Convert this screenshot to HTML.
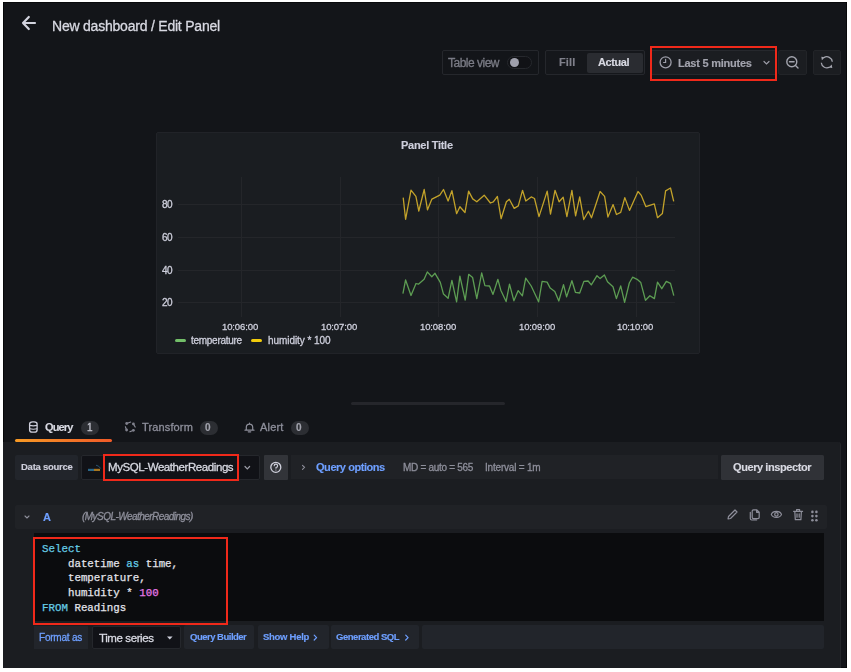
<!DOCTYPE html>
<html><head><meta charset="utf-8">
<style>
*{box-sizing:border-box;margin:0;padding:0}
html,body{width:851px;height:672px;overflow:hidden;background:#fff;font-family:"Liberation Sans",sans-serif}
.a{position:absolute}
#frame{position:absolute;left:3px;top:2px;width:844px;height:666px;background:#131519;box-shadow:0 0 0 0.6px #000 inset}
.t{position:absolute;white-space:nowrap;line-height:1;-webkit-text-stroke:0.3px currentColor;will-change:transform}
.btn{position:absolute;background:#1b1d21;border:1px solid #26282d;border-radius:2px}
</style></head><body>
<div id="frame"></div>
<!-- header -->
<svg class="a" style="left:0;top:0" width="851" height="672" viewBox="0 0 851 672">
  <!-- back arrow -->
  <path d="M23 23 H35 M28.8 17 L23 23 L28.8 29" fill="none" stroke="#d2d3de" stroke-width="2.2" stroke-linecap="round" stroke-linejoin="round"/>
</svg>

<!-- toolbar -->
<div class="a" style="left:442px;top:50px;width:97px;height:25px;border:1px solid #25272c;border-radius:2px"></div>
<div class="a" style="left:507.4px;top:56.2px;width:25px;height:12.8px;border:1.2px solid #26282d;border-radius:7px;background:#111216"></div>
<div class="a" style="left:510px;top:58px;width:9.3px;height:9.3px;border-radius:50%;background:#9fa0ac"></div>

<div class="a" style="left:545px;top:50px;width:100px;height:25px;border:1px solid #25272c;border-radius:2px;background:#15171b"></div>
<div class="a" style="left:587px;top:53px;width:56px;height:20px;background:#2a2c31;border-radius:2px"></div>

<div class="a" style="left:652px;top:50px;width:123px;height:25px;background:#1b1d21;border-top:1px solid #26282d;border-bottom:1px solid #26282d"></div>
<div class="a" style="left:650px;top:46px;width:127px;height:35px;border:2px solid #f0291a"></div>

<div class="a" style="left:778px;top:50px;width:29px;height:25px;background:#1b1d21;border:1px solid #222428;border-radius:2px"></div>
<div class="a" style="left:813px;top:50px;width:28px;height:25px;background:#1b1d21;border:1px solid #222428;border-radius:2px"></div>
<svg class="a" style="left:0;top:0" width="851" height="672" viewBox="0 0 851 672">
  <!-- clock -->
  <circle cx="665.6" cy="62.3" r="5.5" fill="none" stroke="#9c9da8" stroke-width="1.3"/>
  <path d="M665.6 59.3 V62.5 H663.6" fill="none" stroke="#9c9da8" stroke-width="1.2" stroke-linecap="round"/>
  <!-- chevron -->
  <path d="M764 61.5 L766.5 64 L769 61.5" fill="none" stroke="#9c9da8" stroke-width="1.2" stroke-linecap="round"/>
  <!-- zoom out -->
  <circle cx="791.8" cy="61.8" r="5" fill="none" stroke="#a3a4ae" stroke-width="1.4"/>
  <path d="M789.5 61.8 H794.1 M795.5 65.5 L798 68" fill="none" stroke="#a3a4ae" stroke-width="1.4" stroke-linecap="round"/>
  <!-- refresh -->
  <path d="M823.9 57.6 A5.5 5.5 0 0 1 832.3 61.8 M821.3 62.8 A5.5 5.5 0 0 0 829.7 67" fill="none" stroke="#a3a4ae" stroke-width="1.3" stroke-linecap="butt"/>
  <path d="M821.3 56.7 L824.9 57.3 L821.9 60.3 Z M832.3 68.1 L828.7 67.5 L831.7 64.5 Z" fill="#a3a4ae"/>
</svg>

<!-- panel -->
<div class="a" style="left:156px;top:132px;width:544px;height:222px;background:#1a1d21;border:1px solid #212328;border-radius:2px"></div>
<svg class="a" style="left:0;top:0" width="851" height="672" viewBox="0 0 851 672">
  <g stroke="#24262a" stroke-width="1">
    <path d="M178 204.5 H675 M178 237.5 H675 M178 270.5 H675 M178 302.5 H675"/>
    <path d="M241.5 177 V317 M340.5 177 V317 M438.5 177 V317 M537.5 177 V317 M636.5 177 V317"/>
  </g>
  <polyline fill="none" stroke="#c2a22a" stroke-width="1.3" stroke-linejoin="round" points="403.2,197.6 405.6,219.3 411.0,190.1 415.9,196.4 418.8,211.0 424.2,189.5 427.5,209.8 431.9,199.1 439.8,195.2 443.5,189.5 448.1,201.0 451.9,190.7 456.6,213.7 459.9,206.7 465.0,212.5 468.6,191.1 472.7,198.9 476.8,201.8 484.2,195.2 490.4,203.0 493.3,201.8 497.4,196.5 501.1,218.7 506.4,201.8 509.3,199.3 514.2,208.4 518.3,205.9 522.5,190.3 525.8,201.0 531.2,196.9 534.5,198.5 539.0,216.6 547.2,191.1 550.5,214.1 555.0,190.3 559.1,201.8 563.2,197.3 566.9,216.6 571.9,190.3 575.6,215.8 579.7,196.9 583.7,219.5 588.4,211.2 591.5,217.8 600.1,191.5 604.6,196.4 607.9,217.0 613.1,204.6 616.5,214.5 620.7,212.4 624.8,197.6 629.5,210.4 638.0,191.5 641.3,195.4 645.9,206.7 654.3,203.9 657.5,217.7 662.4,213.4 665.6,190.9 670.5,188.0 673.7,201.4"/>
  <polyline fill="none" stroke="#5d9d53" stroke-width="1.3" stroke-linejoin="round" points="402.9,293.7 405.6,280.0 411.0,295.5 416.0,283.5 418.4,284.2 424.1,279.3 427.3,271.9 431.8,276.8 435.0,273.3 440.3,282.4 443.5,294.1 448.1,298.3 451.9,280.3 456.6,301.8 459.9,276.1 465.2,300.1 468.7,274.3 472.6,277.5 476.8,298.7 481.7,272.9 484.9,285.6 489.5,286.0 493.0,294.4 497.9,279.3 500.8,290.2 506.1,301.6 509.5,284.2 513.9,300.8 518.2,290.6 522.4,295.8 525.7,278.2 531.2,286.0 538.6,301.8 542.1,281.4 547.1,282.1 550.2,288.1 554.8,291.6 558.8,301.0 563.5,284.6 566.6,296.9 571.9,280.7 575.4,292.3 579.7,293.0 583.9,281.4 588.1,281.0 591.3,284.9 597.0,275.7 600.1,278.6 604.4,275.0 607.5,281.7 613.0,286.7 616.4,298.6 620.7,285.9 624.6,302.3 629.3,283.0 632.6,277.2 637.1,279.3 640.8,282.6 645.5,300.3 649.9,295.7 654.4,298.6 657.5,282.2 661.8,288.7 666.3,281.3 670.5,283.4 673.8,295.7"/>
  <rect x="175" y="339" width="11" height="3" rx="1.5" fill="#73bf69"/>
  <rect x="251" y="339" width="11" height="3" rx="1.5" fill="#f2cc0c"/>
</svg>

<!-- splitter -->
<div class="a" style="left:351px;top:402px;width:154px;height:3px;background:#25262b;border-radius:2px"></div>

<!-- tabs -->
<svg class="a" style="left:0;top:0" width="851" height="672" viewBox="0 0 851 672">
  <g fill="none" stroke="#cfd0dc" stroke-width="1.2">
    <rect x="29.6" y="421.9" width="7.5" height="10.3" rx="3" ry="2.2" stroke-width="1.3"/>
    <path d="M29.6 425.4 Q33.3 426.3 37.1 425.4 M29.6 428.8 Q33.3 429.7 37.1 428.8" stroke-width="1.1"/>
  </g>
  <g fill="none" stroke="#8e8f9b" stroke-width="1.2" stroke-linecap="round">
    <path d="M126.7 423.4 L130.7 422.1 M133.4 423.9 L135.2 427.1 M133.4 430.3 L129.9 431.8 M126.6 430 L125.4 426.8" stroke-width="1.1"/><g fill="#80818d" stroke="none"><circle cx="126.7" cy="423.5" r="1.4"/><circle cx="133.4" cy="423.9" r="1.4"/><circle cx="133.4" cy="430.3" r="1.4"/><circle cx="126.6" cy="430" r="1.4"/></g>
    <path d="M245 430.2 H254 M246.3 430.2 V427.3 A3.2 3.2 0 0 1 252.7 427.3 V430.2 M249.5 423 V423.8"/><path d="M248.3 431.8 H250.7" stroke-width="1.3"/>
  </g>
  <defs><linearGradient id="og" x1="0" x2="1"><stop offset="0" stop-color="#f79a25"/><stop offset="1" stop-color="#f05a28"/></linearGradient></defs>
  <rect x="15" y="439" width="97" height="3" rx="1.5" fill="url(#og)"/>
</svg>
<div class="a" style="left:81px;top:421px;width:18px;height:14px;border-radius:7px;background:#2c2e33"></div>
<div class="a" style="left:200px;top:421px;width:18px;height:14px;border-radius:7px;background:#2c2e33"></div>
<div class="a" style="left:291px;top:421px;width:18px;height:14px;border-radius:7px;background:#2c2e33"></div>

<!-- content -->
<div class="a" style="left:3px;top:442px;width:838px;height:226px;background:#1b1d21;border-right:1px solid #232529;border-top-right-radius:3px"></div>
<div class="a" style="left:15px;top:455px;width:63px;height:25px;background:#22252b;border-radius:2px"></div>
<div class="a" style="left:81px;top:455px;width:179px;height:25px;background:#111217;border:1px solid #25272c;border-radius:2px"></div>
<div class="a" style="left:103px;top:454px;width:136px;height:27px;border:2px solid #f0291a"></div>
<div class="a" style="left:264px;top:455px;width:24px;height:24.5px;background:#323439;border-radius:1px"></div>
<div class="a" style="left:291px;top:455px;width:427px;height:24px;background:#202226"></div>
<div class="a" style="left:721px;top:455px;width:103px;height:24.5px;background:#303237;border-radius:1.5px"></div>
<svg class="a" style="left:0;top:0" width="851" height="672" viewBox="0 0 851 672">
  <path d="M245 466.5 L247.3 468.8 L249.6 466.5" fill="none" stroke="#9c9da8" stroke-width="1.2" stroke-linecap="round"/>
  <circle cx="275.8" cy="467.3" r="5" fill="none" stroke="#cfd0dc" stroke-width="1.3"/>
  <path d="M274.2 465.8 A1.7 1.7 0 1 1 276 467.5 V468.3" fill="none" stroke="#cfd0dc" stroke-width="1.1" stroke-linecap="round"/>
  <circle cx="275.9" cy="470" r="0.6" fill="#cfd0dc"/>
  <path d="M302.5 465.3 L304.5 467.3 L302.5 469.3" fill="none" stroke="#8e8f9b" stroke-width="1.1" stroke-linecap="round"/>
  <!-- mysql logo -->
  <rect x="88" y="468.8" width="6" height="2.2" fill="#2a6688"/>
  <rect x="94" y="468.8" width="6" height="2.2" fill="#a8761f"/>
  <path d="M96 465.2 Q99 465.6 100.5 468.4" stroke="#29597a" stroke-width="0.9" fill="none"/>
</svg>

<!-- query row -->
<div class="a" style="left:15px;top:505px;width:812px;height:24px;background:#202226;border-radius:2px"></div>
<svg class="a" style="left:0;top:0" width="851" height="672" viewBox="0 0 851 672">
  <path d="M25 516 L27 518 L29 516" fill="none" stroke="#8e8f9b" stroke-width="1.1" stroke-linecap="round"/>
  <g fill="none" stroke="#8e8f9b" stroke-width="1.2" stroke-linecap="round" stroke-linejoin="round">
    <path d="M728 519 L728.5 516.5 L735 510 L737 512 L730.5 518.5 Z"/>
    <path d="M753.5 509.8 H756.6 L759.2 512.3 V517.3 Q759.2 518.6 757.9 518.6 H753.5 Q752.2 518.6 752.2 517.3 V511.1 Q752.2 509.8 753.5 509.8 Z M756.6 509.8 V512.3 H759.2 M750.3 512.3 V518.6 Q750.3 520 751.7 520 H756.6"/>
    <path d="M771.3 514.4 C772.8 510.4 780 510.4 781.5 514.4 C780 518.4 772.8 518.4 771.3 514.4 Z"/>
    <circle cx="776.4" cy="514.4" r="1.7"/>
    <path d="M793.6 511.3 H802.6 M796.6 511.3 V509.6 H799.6 V511.3 M794.8 511.3 L795.3 519.6 H800.9 L801.4 511.3 M797 513.8 V517.2 M799.2 513.8 V517.2"/>
  </g>
  <g fill="#8e8f9b">
    <circle cx="812.4" cy="511.9" r="1.3"/><circle cx="816.4" cy="511.9" r="1.3"/>
    <circle cx="812.4" cy="516.1" r="1.3"/><circle cx="816.4" cy="516.1" r="1.3"/>
    <circle cx="812.4" cy="520.2" r="1.3"/><circle cx="816.4" cy="520.2" r="1.3"/>
  </g>
</svg>

<!-- editor -->
<div class="a" style="left:34px;top:533px;width:790px;height:87.5px;background:#0b0c0e"></div>
<div class="a" style="left:42px;top:542px;font-family:'Liberation Mono',monospace;font-size:10.8px;line-height:14.7px;color:#e2e3ea;-webkit-text-stroke:0.25px currentColor;white-space:pre"><span style="color:#66cde6">Select</span>
    datetime <span style="color:#66cde6">as</span> time,
    temperature,
    humidity * <span style="color:#e878e8">100</span>
<span style="color:#66cde6">FROM</span> Readings</div>
<div class="a" style="left:33px;top:537px;width:195px;height:88px;border:2px solid #f0291a"></div>

<!-- bottom toolbar -->
<div class="a" style="left:33.5px;top:626px;width:54.5px;height:23px;background:#22252b"></div>
<div class="a" style="left:92px;top:626px;width:89px;height:23px;background:#111217;border:1px solid #25272c;border-radius:2px"></div>
<svg class="a" style="left:0;top:0" width="851" height="672" viewBox="0 0 851 672">
  <path d="M167 636.5 H172.6 L169.8 639.5 Z" fill="#cfd0dc"/>
</svg>
<div class="a" style="left:183.5px;top:625px;width:70.5px;height:24px;background:#22252b;border-radius:2px"></div>
<div class="a" style="left:257.5px;top:625px;width:71px;height:24px;background:#22252b;border-radius:2px"></div>
<div class="a" style="left:330.5px;top:625px;width:88px;height:24px;background:#22252b;border-radius:2px"></div>
<div class="a" style="left:422px;top:625px;width:402px;height:24px;background:#22252b;border-radius:2px"></div>
<svg class="a" style="left:0;top:0" width="851" height="672" viewBox="0 0 851 672">
  <path d="M314.2 635.2 L316.6 637.6 L314.2 640 M405.7 635.2 L408.1 637.6 L405.7 640" fill="none" stroke="#6e9fff" stroke-width="1.2" stroke-linecap="round" stroke-linejoin="round"/>
</svg>
<div class="t" style="left:51.8px;top:19.00px;font-size:14px;letter-spacing:-0.216px;color:#d8d9e2">New dashboard / Edit Panel</div>
<div class="t" style="left:448.4px;top:57.00px;font-size:12px;letter-spacing:-0.5px;color:#7b7c86">Table view</div>
<div class="t" style="left:559.1px;top:57.00px;font-size:11px;font-weight:bold;-webkit-text-stroke:0.15px currentColor;letter-spacing:0.1px;color:#80818b">Fill</div>
<div class="t" style="left:598.4px;top:57.00px;font-size:11px;font-weight:bold;-webkit-text-stroke:0.15px currentColor;letter-spacing:-0.4px;color:#d8d9e2">Actual</div>
<div class="t" style="left:678.2px;top:58.00px;font-size:11px;font-weight:bold;-webkit-text-stroke:0.15px currentColor;letter-spacing:-0.238px;color:#a3a4ae">Last 5 minutes</div>
<div class="t" style="left:401.4px;top:140.00px;font-size:11px;font-weight:bold;-webkit-text-stroke:0.15px currentColor;letter-spacing:-0.28px;color:#cdcedb">Panel Title</div>
<div class="t" style="left:162.4px;top:200.00px;font-size:10px;letter-spacing:-0.6px;color:#cdcedb">80</div>
<div class="t" style="left:162.4px;top:233.00px;font-size:10px;letter-spacing:-0.6px;color:#cdcedb">60</div>
<div class="t" style="left:162.4px;top:266.00px;font-size:10px;letter-spacing:-0.6px;color:#cdcedb">40</div>
<div class="t" style="left:162.4px;top:298.00px;font-size:10px;letter-spacing:-0.6px;color:#cdcedb">20</div>
<div class="t" style="left:222.4px;top:322.00px;font-size:9.5px;letter-spacing:-0.114px;color:#cdcedb">10:06:00</div>
<div class="t" style="left:321.1px;top:322.00px;font-size:9.5px;letter-spacing:-0.114px;color:#cdcedb">10:07:00</div>
<div class="t" style="left:419.9px;top:322.00px;font-size:9.5px;letter-spacing:-0.114px;color:#cdcedb">10:08:00</div>
<div class="t" style="left:518.6px;top:322.00px;font-size:9.5px;letter-spacing:-0.114px;color:#cdcedb">10:09:00</div>
<div class="t" style="left:617.4px;top:322.00px;font-size:9.5px;letter-spacing:-0.114px;color:#cdcedb">10:10:00</div>
<div class="t" style="left:191.4px;top:336.00px;font-size:10px;letter-spacing:-0.28px;color:#cdcedb">temperature</div>
<div class="t" style="left:267.6px;top:336.00px;font-size:10px;letter-spacing:-0.069px;color:#cdcedb">humidity * 100</div>
<div class="t" style="left:45.3px;top:422.00px;font-size:11px;font-weight:bold;-webkit-text-stroke:0.15px currentColor;letter-spacing:-0.875px;color:#d8d9e2">Query</div>
<div class="t" style="left:87.0px;top:423.00px;font-size:10px;letter-spacing:0px;color:#c3c4ce">1</div>
<div class="t" style="left:205.0px;top:423.00px;font-size:10px;font-weight:bold;-webkit-text-stroke:0.15px currentColor;letter-spacing:0px;color:#a3a4ae">0</div>
<div class="t" style="left:296.0px;top:423.00px;font-size:10px;font-weight:bold;-webkit-text-stroke:0.15px currentColor;letter-spacing:0px;color:#a3a4ae">0</div>
<div class="t" style="left:142.0px;top:422.00px;font-size:11px;letter-spacing:0.137px;color:#8e8f9b">Transform</div>
<div class="t" style="left:260.0px;top:422.00px;font-size:11px;letter-spacing:0.175px;color:#8e8f9b">Alert</div>
<div class="t" style="left:20.5px;top:462.00px;font-size:9.5px;font-weight:bold;-webkit-text-stroke:0.15px currentColor;letter-spacing:-0.25px;color:#cdcedb">Data source</div>
<div class="t" style="left:107.7px;top:462.00px;font-size:11.5px;letter-spacing:-0.42px;color:#d8d9e2">MySQL-WeatherReadings</div>
<div class="t" style="left:315.8px;top:462.00px;font-size:11px;font-weight:bold;-webkit-text-stroke:0.15px currentColor;letter-spacing:-0.45px;color:#6e9fff">Query options</div>
<div class="t" style="left:403.2px;top:463.00px;font-size:10px;letter-spacing:-0.3px;color:#8e8f9b">MD = auto = 565</div>
<div class="t" style="left:485.2px;top:463.00px;font-size:10px;letter-spacing:-0.2px;color:#8e8f9b">Interval = 1m</div>
<div class="t" style="left:733.1px;top:462.00px;font-size:11px;font-weight:bold;-webkit-text-stroke:0.15px currentColor;letter-spacing:-0.421px;color:#d8d9e2">Query inspector</div>
<div class="t" style="left:42.7px;top:512.00px;font-size:11px;font-weight:bold;-webkit-text-stroke:0.15px currentColor;letter-spacing:-0.3px;color:#6e9fff">A</div>
<div class="t" style="left:82.0px;top:512.00px;font-size:10px;font-style:italic;letter-spacing:-0.541px;color:#8e8f9b">(MySQL-WeatherReadings)</div>
<div class="t" style="left:39.1px;top:633.00px;font-size:10px;letter-spacing:-0.213px;color:#6e9fff">Format as</div>
<div class="t" style="left:98.7px;top:633.00px;font-size:11.5px;letter-spacing:-0.4px;color:#d8d9e2">Time series</div>
<div class="t" style="left:190.0px;top:632.00px;font-size:9.5px;font-weight:bold;-webkit-text-stroke:0.15px currentColor;letter-spacing:-0.5px;color:#6e9fff">Query Builder</div>
<div class="t" style="left:262.7px;top:632.00px;font-size:9.5px;font-weight:bold;-webkit-text-stroke:0.15px currentColor;letter-spacing:-0.275px;color:#6e9fff">Show Help</div>
<div class="t" style="left:336.0px;top:632.00px;font-size:9.5px;font-weight:bold;-webkit-text-stroke:0.15px currentColor;letter-spacing:-0.467px;color:#6e9fff">Generated SQL</div>
</body></html>
